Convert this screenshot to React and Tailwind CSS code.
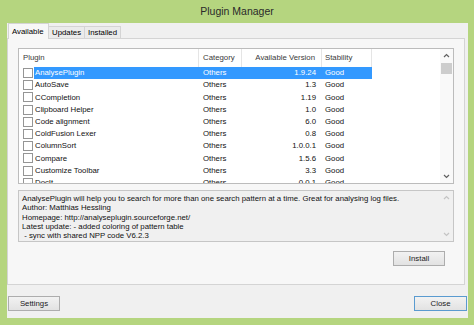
const plugins = [
  ['AnalysePlugin', '1.9.24'],
  ['AutoSave', '1.3'],
  ['CCompletion', '1.19'],
  ['Clipboard Helper', '1.0'],
  ['Code alignment', '6.0'],
  ['ColdFusion Lexer', '0.8'],
  ['ColumnSort', '1.0.0.1'],
  ['Compare', '1.5.6'],
  ['Customize Toolbar', '3.3'],
  ['DocIt', '0.0.1'],
];

function Button({ children, primary, className = '' }) {
  return (
    <div
      className={`h-[15px] flex items-center justify-center border bg-gradient-to-b from-[#f2f2f2] to-[#e2e2e2] text-[7.8px] text-[#1a1a1a] ${
        primary ? 'border-[#5a9bd0]' : 'border-[#adadad]'
      } ${className}`}
    >
      {children}
    </div>
  );
}

function Arrow({ up, light }) {
  return (
    <svg width="7" height="5" viewBox="0 0 7 5">
      <path
        d={up ? 'M1 4 L3.5 1.5 L6 4' : 'M1 1 L3.5 3.5 L6 1'}
        fill="none"
        stroke={light ? '#c4c4c4' : '#606060'}
        strokeWidth="1.2"
      />
    </svg>
  );
}

export default function App() {
  return (
    <div
      className="w-[474px] h-[325px] bg-[#b5d57f] flex flex-col overflow-hidden"
      style={{ fontFamily: '"Liberation Sans", Arial, sans-serif' }}
    >
      {/* title bar */}
      <div className="h-[23px] flex items-center justify-center text-[10.5px] text-[#2a2a2a] pt-[1px]">
        Plugin Manager
      </div>

      <div className="ml-[7px] mr-[6px] h-[295px] bg-[#f0f0f0] flex flex-col">
        {/* tabs */}
        <div className="flex items-end h-[15px] pl-[1px]">
          <div className="h-[16px] w-[41px] -mb-[1px] bg-[#f7f7f7] border border-b-0 border-[#d4d4d4] text-[7.8px] flex items-center pl-[3px] z-10">
            Available
          </div>
          <div className="h-[12px] w-[36px] bg-[#ebebeb] border border-l-0 border-b-0 border-[#d4d4d4] text-[7.8px] flex items-center pl-[3px]">
            Updates
          </div>
          <div className="h-[12px] w-[36px] bg-[#ebebeb] border border-l-0 border-b-0 border-[#d4d4d4] text-[7.8px] flex items-center pl-[3px]">
            Installed
          </div>
        </div>

        {/* tab panel */}
        <div className="mr-[3px] h-[247px] border border-[#d4d4d4] bg-[#f7f7f7] flex flex-col pt-[9px] pl-[10px] pr-[10px]">
          {/* list view */}
          <div className="h-[136px] border border-[#bcbcbc] bg-white flex overflow-hidden">
            <div className="flex-1 flex flex-col overflow-hidden">
              <div className="h-[18px] shrink-0 flex text-[7.8px] text-[#3a3a3a]">
                <div className="w-[180px] pl-[4px] flex items-center border-r border-[#e5e5e5]">Plugin</div>
                <div className="w-[43px] pl-[4px] flex items-center border-r border-[#e5e5e5]">Category</div>
                <div className="w-[80px] pr-[6px] flex items-center justify-end border-r border-[#e5e5e5]">Available Version</div>
                <div className="w-[50px] pl-[3px] flex items-center border-r border-[#e5e5e5]">Stability</div>
              </div>
              {plugins.map(([name, ver], i) => {
                const sel = i === 0;
                return (
                  <div key={name} className="h-[12.2px] shrink-0 flex items-center text-[7.8px] text-[#111]">
                    <div className="w-[15px] flex items-center pl-[4px]">
                      <div className="w-[10px] h-[10px] border border-[#959595] bg-white" />
                    </div>
                    <div className={`w-[338px] h-full flex items-center ${sel ? 'bg-[#3399ff] text-white' : ''}`}>
                      <div className="w-[165px] pl-[1px]">{name}</div>
                      <div className="w-[43px] pl-[4px]">Others</div>
                      <div className="w-[80px] pr-[6px] text-right">{ver}</div>
                      <div className="w-[50px] pl-[3px]">Good</div>
                    </div>
                  </div>
                );
              })}
            </div>
            {/* scrollbar */}
            <div className="w-[13px] bg-[#f9f9f9] flex flex-col items-center">
              <div className="h-[13px] flex items-center justify-center"><Arrow up /></div>
              <div className="w-[11px] h-[11px] bg-[#cdcdcd] mt-[1px]" />
              <div className="flex-1" />
              <div className="h-[13px] flex items-center justify-center"><Arrow /></div>
            </div>
          </div>

          {/* description */}
          <div className="mt-[6px] h-[52px] border border-[#c6c6c6] bg-[#f0f0f0] flex">
            <div className="flex-1 pl-[3px] pt-[3px] text-[7.8px] leading-[9.3px] text-[#111]">
              <div>AnalysePlugin will help you to search for more than one search pattern at a time. Great for analysing log files.</div>
              <div>Author: Matthias Hessling</div>
              <div>Homepage: http://analyseplugin.sourceforge.net/</div>
              <div>Latest update: - added coloring of pattern table</div>
              <div className="whitespace-pre"> - sync with shared NPP code V6.2.3</div>
            </div>
            <div className="w-[13px] flex flex-col items-center justify-between py-[4px]">
              <Arrow up light />
              <Arrow light />
            </div>
          </div>

          <div className="flex justify-end mt-[9px] pr-[9px]">
            <Button className="w-[52px]">Install</Button>
          </div>
        </div>

        {/* bottom buttons */}
        <div className="flex justify-between mt-[11px] pl-[1px] pr-[1px]">
          <Button className="w-[52px]">Settings</Button>
          <Button primary className="w-[53px]">Close</Button>
        </div>
      </div>
    </div>
  );
}
